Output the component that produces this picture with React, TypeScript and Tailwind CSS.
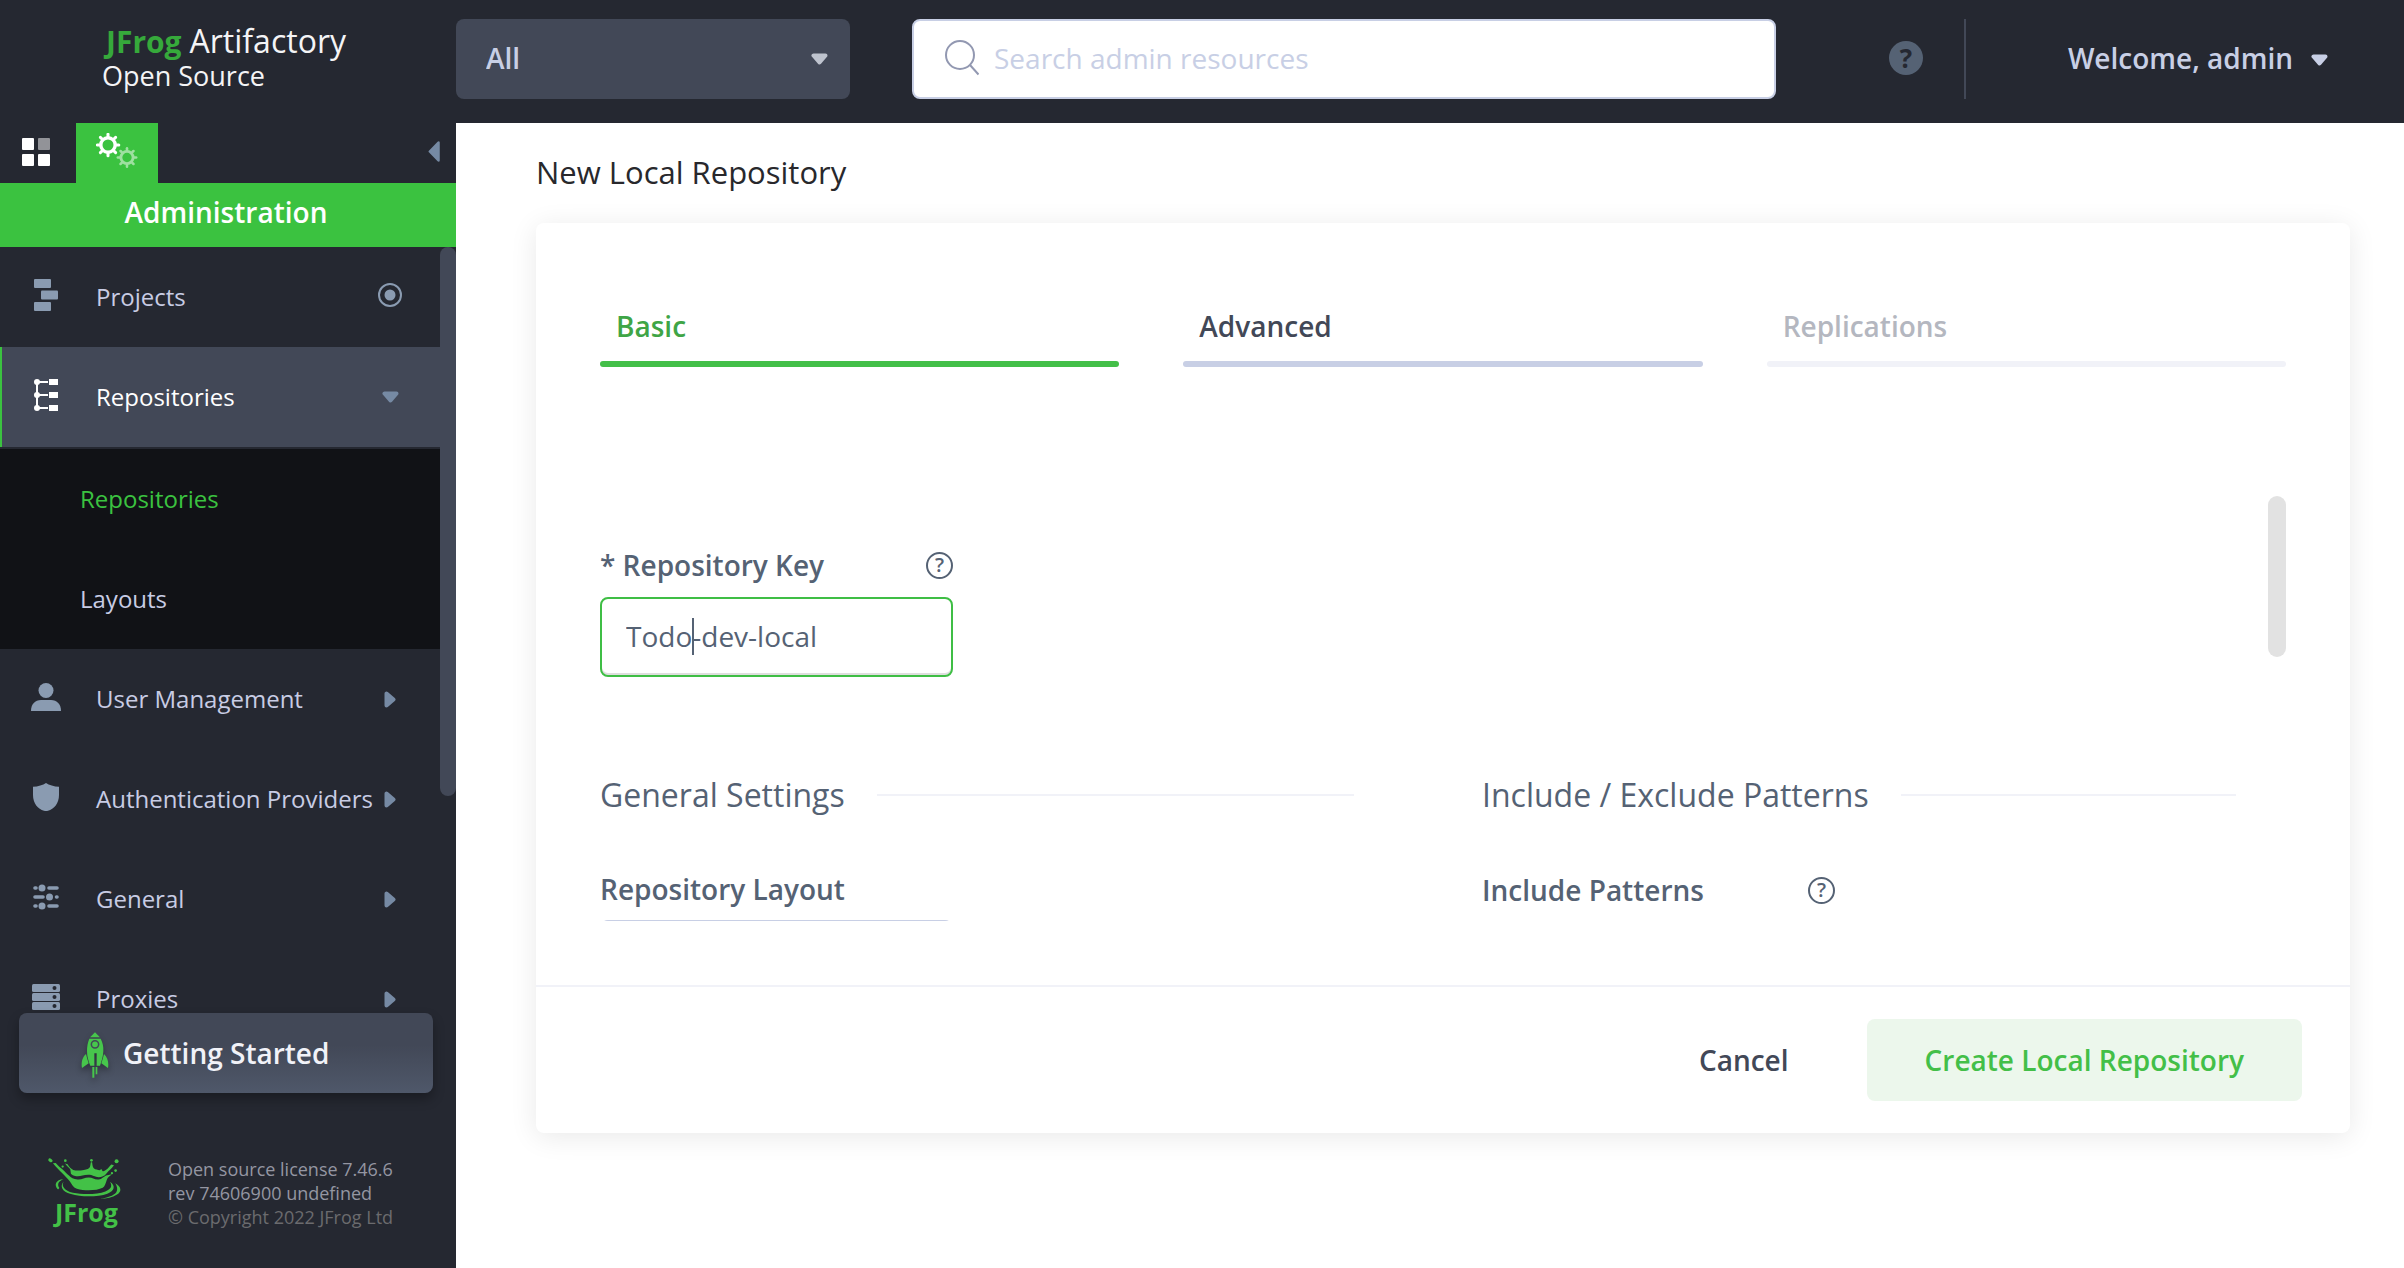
import type { ReactNode } from "react";

function Caret({ className }: { className: string }) {
  return (
    <svg viewBox="0 0 17 12" width="17" height="12" className={className} aria-hidden="true">
      <path d="M2.5 2.5h12L8.5 9.5z" fill="currentColor" stroke="currentColor" strokeWidth="4" strokeLinejoin="round" />
    </svg>
  );
}

function SideArrow() {
  return (
    <svg viewBox="0 0 12 17" width="12" height="17" className="text-[#768aa4]" aria-hidden="true">
      <path d="M2.5 2.5v12L9.5 8.5z" fill="currentColor" stroke="currentColor" strokeWidth="4" strokeLinejoin="round" />
    </svg>
  );
}

function GridIcon() {
  return (
    <svg viewBox="0 0 28 28" width="28" height="28" fill="#fff" aria-hidden="true">
      <rect width="12" height="12" rx="1" />
      <rect x="16" width="12" height="12" rx="1" fill="#929398" />
      <rect y="16" width="12" height="12" rx="1" />
      <rect x="16" y="16" width="12" height="12" rx="1" />
    </svg>
  );
}

function Gear({ cx, cy, r, color }: { cx: number; cy: number; r: number; color: string }) {
  return (
    <g stroke={color} fill="none" transform={`translate(${cx} ${cy}) scale(${r / 12})`}>
      <circle r="7.2" strokeWidth="3.4" />
      {[0, 45, 90, 135, 180, 225, 270, 315].map((a) => (
        <path key={a} d="M0 -8.4V-10.8" strokeWidth="3" strokeLinecap="round" transform={`rotate(${a})`} />
      ))}
    </g>
  );
}

function GearsIcon() {
  return (
    <svg viewBox="0 0 42 36" width="42" height="36" aria-hidden="true">
      <Gear cx={12} cy={12} r={12} color="#ffffff" />
      <Gear cx={31} cy={24.5} r={10.2} color="#9ee0a0" />
    </svg>
  );
}

function ProjectsIcon() {
  return (
    <svg viewBox="0 0 24 32" width="24" height="32" fill="currentColor" aria-hidden="true">
      <rect width="17" height="9" rx="1" />
      <rect x="7" y="11.5" width="17" height="9" rx="1" />
      <rect y="23" width="17" height="9" rx="1" />
    </svg>
  );
}

function RepositoriesIcon() {
  return (
    <svg viewBox="0 0 24 32" width="24" height="32" fill="currentColor" aria-hidden="true">
      <path d="M3 3v26M3 3h11M3 16h11M3 29h11" stroke="currentColor" strokeWidth="2" fill="none" />
      <circle cx="3" cy="3" r="3" />
      <circle cx="3" cy="16" r="3" />
      <circle cx="3" cy="29" r="3" />
      <rect x="15" y="0" width="9" height="6" />
      <rect x="15" y="13" width="9" height="6" />
      <rect x="15" y="26" width="9" height="6" />
    </svg>
  );
}

function UserIcon() {
  return (
    <svg viewBox="0 0 30 28" width="30" height="28" fill="currentColor" aria-hidden="true">
      <circle cx="15" cy="7.5" r="7.5" />
      <path d="M0 28c0-7 4-11 10-11h10c6 0 10 4 10 11z" />
    </svg>
  );
}

function ShieldIcon() {
  return (
    <svg viewBox="0 0 26 28" width="26" height="28" fill="currentColor" aria-hidden="true">
      <path d="M13 0c3 2.200 8 3.500 13 3.800V12c0 8-5 14.500-11 15.700q-2 .5-4 0C5 26.500 0 20 0 12V3.800C5 3.500 10 2.200 13 0z" />
    </svg>
  );
}

function SlidersIcon() {
  return (
    <svg viewBox="0 0 26 26" width="26" height="26" fill="currentColor" aria-hidden="true">
      <path
        d="M2 4h1M16 4h8M2 13h8M23.500 13h.500M2 22h1M16 22h8"
        stroke="currentColor"
        strokeWidth="3.600"
        strokeLinecap="round"
      />
      <circle cx="9" cy="4" r="3.500" />
      <circle cx="16.500" cy="13" r="3.500" />
      <circle cx="9" cy="22" r="3.500" />
    </svg>
  );
}

function ProxiesIcon() {
  return (
    <svg viewBox="0 0 28 26" width="28" height="26" fill="currentColor" aria-hidden="true">
      {[0, 9, 18].map((y) => (
        <g key={y}>
          <rect y={y} width="28" height="8" rx="1.500" />
          <circle cx="22.500" cy={y + 4} r="2" fill="#252831" />
        </g>
      ))}
    </svg>
  );
}

function TargetIcon() {
  return (
    <svg viewBox="0 0 24 24" width="24" height="24" className="mb-1 text-[#8a9bb1]" aria-hidden="true">
      <circle cx="12" cy="12" r="11" fill="none" stroke="currentColor" strokeWidth="2" />
      <circle cx="12" cy="12" r="5.500" fill="currentColor" />
    </svg>
  );
}

function RocketIcon() {
  return (
    <svg
      viewBox="242 157 84 138"
      width="28"
      height="46"
      className="drop-shadow-[0_4px_3px_rgba(0,0,0,0.35)]"
      fill="#47c64c"
      aria-hidden="true"
    >
      <path d="M284 158l14 14v1h-28v-1z" />
      <path d="M267 177h34c6 12 9 24 8 38-1 16-5 30-10 43h-10v-37h-7v37h-12c-6-14-10-28-10-44 0-13 2-25 7-37z" />
      <circle cx="284" cy="194" r="11" fill="none" stroke="#424857" strokeWidth="4.500" />
      <path d="M257 223c2 10 5 19 8 28l-20 14c-3-17 1-32 12-42z" />
      <path d="M311 223c-2 10-5 19-8 28l20 14c3-17-1-32-12-42z" />
      <path d="M276 262h6v32h-6zM286 262h5v22h-5z" />
    </svg>
  );
}

function SplashLogo() {
  return (
    <svg viewBox="140 530 224 130" width="75" height="43" fill="#43c147" aria-hidden="true">
      <ellipse cx="149" cy="540" rx="7" ry="5" transform="rotate(30 149 540)" />
      <circle cx="194" cy="541" r="4" />
      <circle cx="186" cy="559" r="3.500" />
      <circle cx="273" cy="540" r="4" />
      <circle cx="349" cy="543" r="6" />
      <circle cx="346" cy="571" r="4" />
      <circle cx="335" cy="579" r="3.500" />
      <path d="M156 549l9-1c8 10 14 13 20 19 8 7 14 14 20 19 6 7 14 11 26 12 14 1 20-6 34-6 12 0 18 8 30 6 10-1 14-8 22-12l18-4c-8 6-14 10-16 18-3 9-5 18-12 23-18 9-54 10-78 3-10-3-15-13-21-22-12-16-34-34-52-56z" />
      <path d="M193 550l8 2c4 8 9 13 17 17 10 3 20 2 32 0 10-2 15-3 18-8 2-5 2-10 3-15h4c1 7 1 14 5 18 5 5 12 4 18 6l5-4c3 4 3 7 6 7 12-3 16-12 24-20l8 2c-6 10-16 16-22 24-7 9-15 12-24 12-12 0-18-7-32-7-16 0-24 6-36 4-9-1-13-4-16-7l-2-14c-4-5-10-9-16-17z" />
      <path d="M189 604c-8 14 2 28 28 34 34 7 74 5 98-4 17-6 22-16 14-29 18 12 14 28-8 36-28 10-78 11-110 1-28-8-34-24-22-38z" />
      <path d="M188 597c-14 6-20 14-12 27l-4 4c-14-14-6-30 16-31z" />
      <path d="M345 609c20 12 20 26 4 35-12 8-30 12-50 13 30-6 48-13 51-25 2-7 0-14-5-23z" />
    </svg>
  );
}

function HelpMark({ label }: { label: string }) {
  return (
    <button
      type="button"
      aria-label={label}
      className="flex size-[27px] items-center justify-center rounded-full border-2 border-[#556274] text-[20px] leading-none font-semibold text-[#556274]"
    >
      ?
    </button>
  );
}

function NavItem({ icon, label, trailing, active = false }: { icon: ReactNode; label: string; trailing: ReactNode; active?: boolean }) {
  return (
    <a
      href="#"
      className={
        active
          ? "flex h-[100px] shrink-0 items-center border-l-2 border-[#3bc240] bg-[#424857] pr-[38px] text-white"
          : "flex h-[100px] shrink-0 items-center border-l-2 border-transparent pr-[38px] text-[#c8cce4]"
      }
    >
      <span className={active ? "flex w-[88px] justify-center pb-1 text-white" : "flex w-[88px] justify-center pb-1 text-[#8a9bb1]"}>
        {icon}
      </span>
      <span className="ml-1.5 flex-1 whitespace-nowrap text-[24px]">{label}</span>
      <span className="-ml-4 flex w-6 justify-center">{trailing}</span>
    </a>
  );
}

function Header() {
  return (
    <header className="flex h-[123px] shrink-0 items-start bg-[#252831] pt-[19px] pr-[76px]">
      <a href="#" className="w-[456px] shrink-0 pt-1.5 pl-[102px] text-[#f4f4f6]">
        <span className="block pl-1 text-[32px] leading-8">
          <span className="mr-2 text-[30px] leading-8 font-bold text-[#36a93b]">JFrog</span>
          Artifactory
        </span>
        <span className="block pt-0.5 text-[27px] leading-8">Open Source</span>
      </a>
      <div className="relative w-[394px] shrink-0">
        <select
          aria-label="Resource type"
          className="h-20 w-full appearance-none rounded-lg bg-[#424857] px-[30px] pb-0.5 text-[28px] font-semibold text-[#c8cfe5]"
        >
          <option>All</option>
        </select>
        <Caret className="pointer-events-none absolute top-[34px] right-[22px] text-[#bec3ce]" />
      </div>
      <label className="ml-[62px] flex h-20 min-w-0 flex-1 items-center rounded-lg border-2 border-[#c8cfe5] bg-white pb-0.5 pl-[31px]">
        <svg viewBox="0 0 34 36" width="34" height="36" fill="none" stroke="#9298b1" strokeWidth="2" aria-hidden="true">
          <circle cx="15" cy="15" r="14" />
          <path d="M25 25l8.500 9.500" />
        </svg>
        <input
          type="search"
          aria-label="Search admin resources"
          placeholder="Search admin resources"
          className="ml-[15px] min-w-0 flex-1 bg-transparent text-[28px] outline-none placeholder:text-[#c8cfe5]"
        />
      </label>
      <div className="ml-[113px] flex h-20 shrink-0 items-center">
        <button
          type="button"
          aria-label="Help"
          className="mr-[41px] mb-0.5 flex size-[34px] items-center justify-center rounded-full bg-[#556274] text-[26px] leading-none font-bold text-[#252831]"
        >
          ?
        </button>
        <div className="h-20 w-0.5 bg-[#424857]" />
        <button type="button" className="ml-[102px] flex items-center pb-0.5 text-[28px] font-semibold whitespace-nowrap text-[#c8cfe5]">
          Welcome, admin
          <Caret className="mt-1 ml-[18px]" />
        </button>
      </div>
    </header>
  );
}

function Sidebar() {
  return (
    <aside className="flex min-h-0 w-[456px] shrink-0 flex-col bg-[#252831]">
      <div className="flex h-[60px] shrink-0 items-stretch">
        <button type="button" aria-label="Application" className="flex w-[76px] items-center pb-0.5 pl-[22px]">
          <GridIcon />
        </button>
        <button type="button" aria-label="Administration" className="flex w-[82px] items-center justify-center bg-[#3bc240] pb-1">
          <GearsIcon />
        </button>
        <button type="button" aria-label="Collapse menu" className="ml-auto pr-4 pb-1 text-[#768aa4]">
          <svg viewBox="0 0 12 21" width="12" height="21" aria-hidden="true">
            <path d="M10.500 1.500v18L1.800 10.500z" fill="currentColor" stroke="currentColor" strokeWidth="2.500" strokeLinejoin="round" />
          </svg>
        </button>
      </div>
      <h2 className="flex h-16 shrink-0 items-start justify-center bg-[#3bc240] pt-2.5 pr-1 text-[28px] leading-[38px] font-semibold text-white">
        Administration
      </h2>
      <div className="flex min-h-0 flex-1">
        <nav className="flex min-h-0 flex-1 flex-col overflow-hidden">
          <NavItem icon={<ProjectsIcon />} label="Projects" trailing={<TargetIcon />} />
          <NavItem active icon={<RepositoriesIcon />} label="Repositories" trailing={<Caret className="text-[#768aa4]" />} />
          <div className="mt-0.5 shrink-0 bg-[#111216] text-[24px]">
            <a href="#" className="flex h-[100px] items-center pl-20 text-[#3bc240]">
              Repositories
            </a>
            <a href="#" className="flex h-[100px] items-center pl-20 text-[#c8cce4]">
              Layouts
            </a>
          </div>
          <NavItem icon={<UserIcon />} label="User Management" trailing={<SideArrow />} />
          <NavItem icon={<ShieldIcon />} label="Authentication Providers" trailing={<SideArrow />} />
          <NavItem icon={<SlidersIcon />} label="General" trailing={<SideArrow />} />
          <NavItem icon={<ProxiesIcon />} label="Proxies" trailing={<SideArrow />} />
        </nav>
        <div className="w-4 shrink-0">
          <div className="h-[549px] max-h-full rounded-full bg-[#424857]" />
        </div>
      </div>
      <button
        type="button"
        className="mr-[23px] ml-[19px] flex h-20 shrink-0 items-center rounded-lg bg-gradient-to-b from-[#424857] from-40% to-[#4f586a] pl-[62px] text-[28px] font-semibold text-[#f1f2f8] shadow-[0_6px_12px_rgba(0,0,0,0.3)]"
      >
        <span className="mt-1">
          <RocketIcon />
        </span>
        <span className="ml-3.5">Getting Started</span>
      </button>
      <footer className="flex shrink-0 items-start pt-16 pb-[39px] pl-[47px] text-[18px] leading-6 text-[#9496a2]">
        <div className="w-[75px]">
          <SplashLogo />
          <p className="-mt-1 pl-2 text-[25px] leading-8 font-bold text-[#43c147]">JFrog</p>
        </div>
        <div className="ml-[46px] whitespace-nowrap">
          <p>Open source license 7.46.6</p>
          <p>rev 74606900 undefined</p>
          <p className="text-[#6b6b6e]">© Copyright 2022 JFrog Ltd</p>
        </div>
      </footer>
    </aside>
  );
}

function SectionTitle({ children }: { children: ReactNode }) {
  return (
    <h3 className="flex items-center text-[32px] leading-10 whitespace-nowrap">
      {children}
      <span className="ml-8 h-0.5 flex-1 bg-[#f1f2f8]" />
    </h3>
  );
}

export default function App() {
  return (
    <div className="flex h-screen flex-col overflow-hidden bg-white font-['Open_Sans',sans-serif]">
      <Header />
      <div className="flex min-h-0 flex-1">
        <Sidebar />
        <main className="flex min-w-0 flex-1 flex-col pt-[27px] pr-[54px] pb-[135px] pl-20">
          <h1 className="text-[31px] leading-[44px] text-[#28282c]">New Local Repository</h1>
          <section className="mt-[29px] flex min-h-0 flex-1 flex-col rounded-lg bg-white text-[#556274] shadow-[0_4px_28px_rgba(0,0,0,0.09)]">
            <div role="tablist" className="grid grid-cols-3 gap-16 px-16 pt-[83px] text-[28px] leading-10 font-semibold">
              <button role="tab" aria-selected="true" type="button" className="text-left text-[#3fa546]">
                <span className="block px-4 pb-[15px]">Basic</span>
                <span className="block h-1.5 rounded-full bg-[#43bf48]" />
              </button>
              <button role="tab" aria-selected="false" type="button" className="text-left text-[#424857]">
                <span className="block px-4 pb-[15px]">Advanced</span>
                <span className="block h-1.5 rounded-full bg-[#c8cfe5]" />
              </button>
              <button role="tab" aria-selected="false" type="button" className="text-left text-[#b4b7c0]">
                <span className="block px-4 pb-[15px]">Replications</span>
                <span className="block h-1.5 rounded-full bg-[#f1f2f8]" />
              </button>
            </div>
            <div className="mx-16 mt-[129px] mb-16 flex min-h-0 flex-1 overflow-hidden">
              <div className="min-w-0 flex-1 pt-[49px]">
                <div className="w-[353px]">
                  <div className="flex items-center justify-between text-[28px] leading-10 font-semibold">
                    <label htmlFor="repo-key">* Repository Key</label>
                    <HelpMark label="About the repository key" />
                  </div>
                  <div className="relative mt-3">
                    <input
                      id="repo-key"
                      defaultValue="Todo-dev-local"
                      className="h-20 w-full rounded-lg border-2 border-[#3fbe45] px-6 pb-0.5 text-[28px] shadow-[inset_0_-2px_0_#dedede] outline-none"
                    />
                    <span className="absolute top-[21px] left-[92px] h-[37px] w-0.5 bg-[#556274]" />
                  </div>
                </div>
                <div className="mt-[98px] grid grid-cols-2 gap-32">
                  <div>
                    <SectionTitle>General Settings</SectionTitle>
                    <div className="mt-[54px] w-[353px]">
                      <label htmlFor="repo-layout" className="block text-[28px] leading-10 font-semibold">
                        Repository Layout
                      </label>
                      <select id="repo-layout" className="mt-[11px] h-20 w-full appearance-none rounded-lg border-2 border-[#c8cfe5] px-6 text-[28px]">
                        <option>simple-default</option>
                      </select>
                    </div>
                  </div>
                  <div>
                    <SectionTitle>Include / Exclude Patterns</SectionTitle>
                    <div className="mt-[55px] flex w-[353px] items-center justify-between text-[28px] leading-10 font-semibold">
                      <span>Include Patterns</span>
                      <HelpMark label="About include patterns" />
                    </div>
                  </div>
                </div>
              </div>
              <div className="ml-8 w-[18px] shrink-0">
                <div className="h-[161px] rounded-full bg-[#e2e2e2]" />
              </div>
            </div>
            <div className="flex shrink-0 items-center justify-end border-t-2 border-[#f1f2f8] px-12 py-8 text-[28px] font-semibold">
              <button type="button" className="h-[82px] px-[60px] text-[#424857]">
                Cancel
              </button>
              <button type="button" className="ml-[18px] h-[82px] rounded-lg bg-[#ecf7ec] px-[58px] text-[#43bf48]">
                Create Local Repository
              </button>
            </div>
          </section>
        </main>
      </div>
    </div>
  );
}
